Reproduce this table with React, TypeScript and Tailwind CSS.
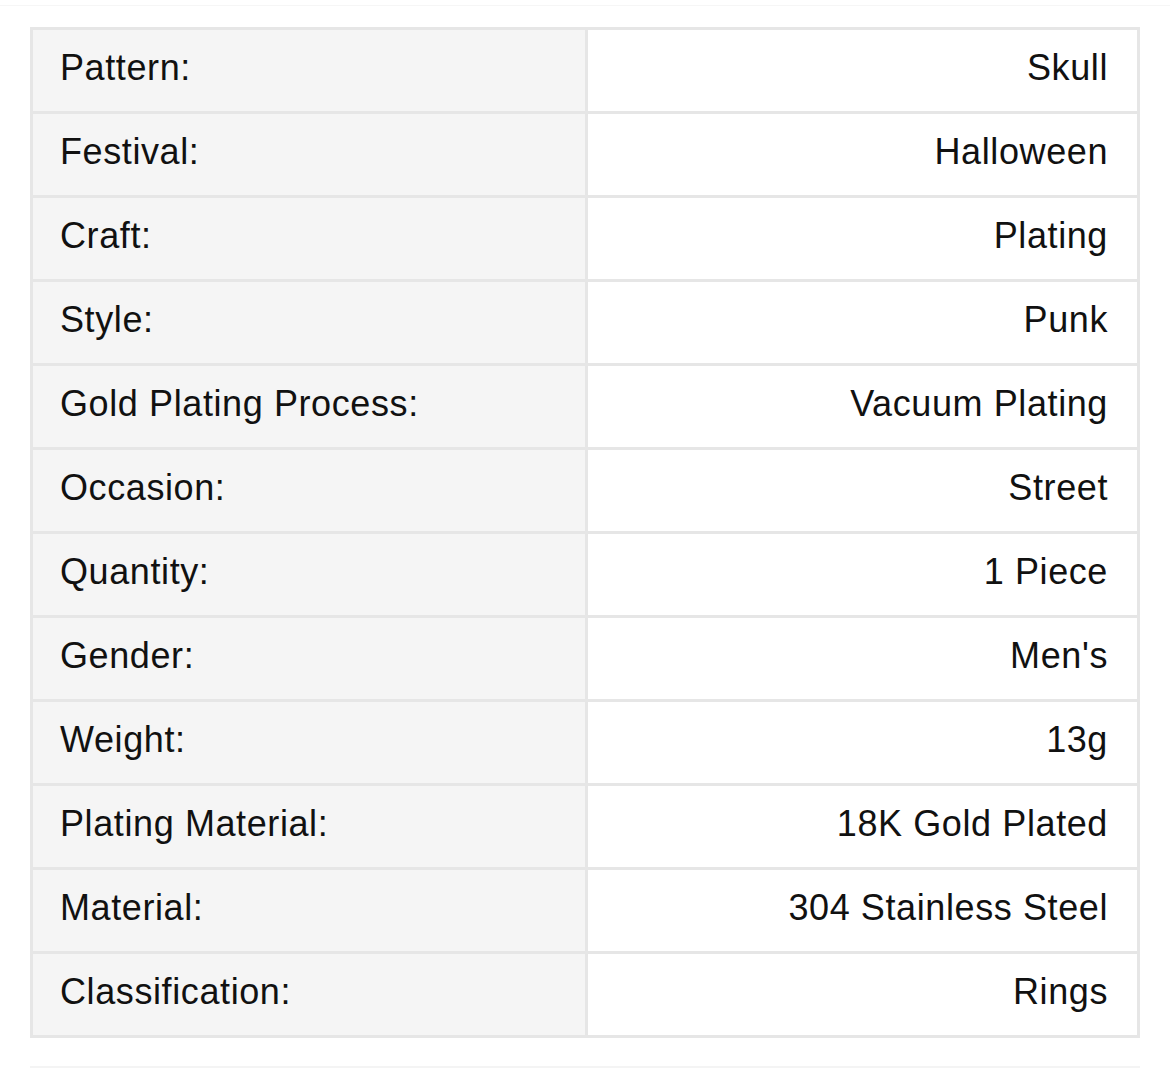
const specs: [string, string][] = [
  ["Pattern:", "Skull"],
  ["Festival:", "Halloween"],
  ["Craft:", "Plating"],
  ["Style:", "Punk"],
  ["Gold Plating Process:", "Vacuum Plating"],
  ["Occasion:", "Street"],
  ["Quantity:", "1 Piece"],
  ["Gender:", "Men's"],
  ["Weight:", "13g"],
  ["Plating Material:", "18K Gold Plated"],
  ["Material:", "304 Stainless Steel"],
  ["Classification:", "Rings"],
]

export default function App() {
  return (
    <div
      className="w-[1170px] h-[1082px] bg-white"
      style={{ fontFamily: '"Liberation Sans", Arial, sans-serif' }}
    >
      <div className="h-[6px] border-b border-[#f6f6f6]" />
      <div className="px-[30px] pt-[21px]">
        <table className="w-[1110px] border-collapse border-[3px] border-[#e6e6e6] table-fixed">
          <tbody>
            {specs.map(([label, value]) => (
              <tr key={label} className="h-[84px]">
                <td className="w-[555px] border-[3px] border-[#e6e6e6] bg-[#f5f5f5] pl-[27px] pb-[6px] text-[36px] tracking-[0.6px] text-[#111]">
                  {label}
                </td>
                <td className="border-[3px] border-[#e6e6e6] bg-white pr-[29px] pb-[6px] text-right text-[36px] tracking-[0.6px] text-[#111]">
                  {value}
                </td>
              </tr>
            ))}
          </tbody>
        </table>
        <div className="mt-[28px] border-t-2 border-[#f4f4f4]" />
      </div>
    </div>
  )
}
